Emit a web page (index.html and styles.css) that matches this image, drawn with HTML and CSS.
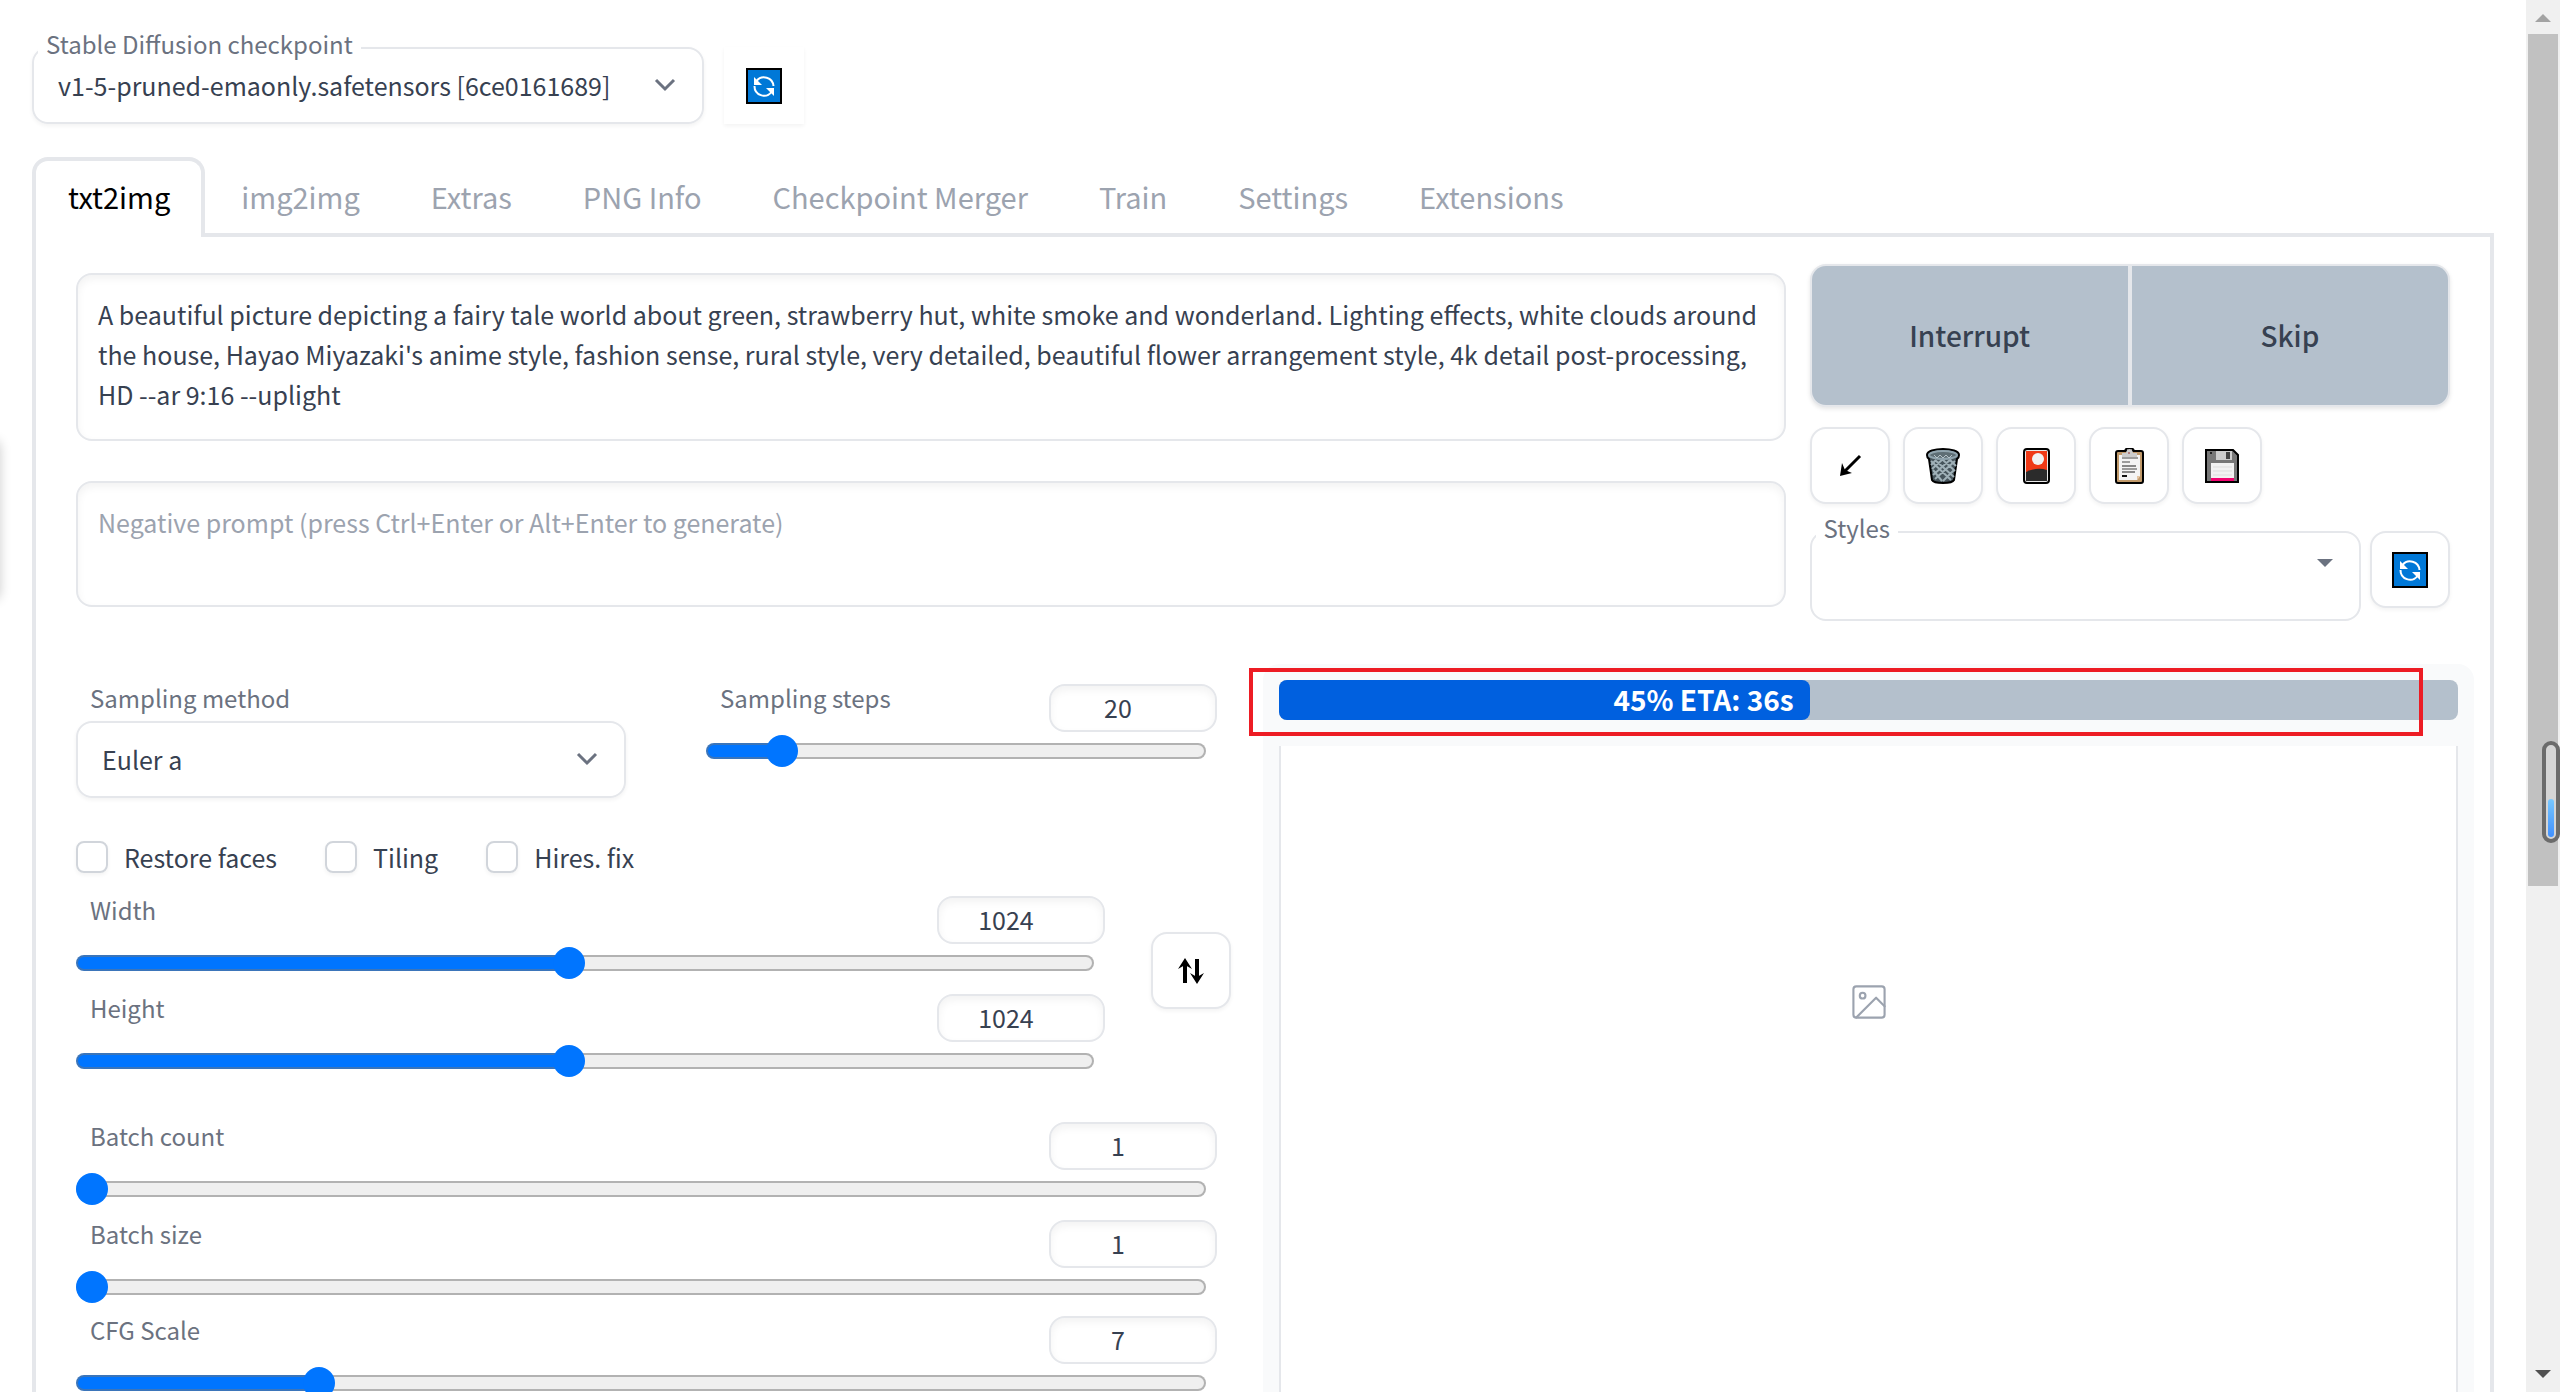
FILE: index.html
```html
<!DOCTYPE html>
<html lang="en">
<head>
<meta charset="utf-8">
<title>Stable Diffusion</title>
<link rel="stylesheet" href="styles.css">
</head>
<body>
<svg class="symbols" aria-hidden="true">
  <symbol id="refresh" viewBox="0 0 36 36">
    <rect width="36" height="36" fill="#000"/><rect x="2" y="2" width="32" height="32" fill="#0078d7"/>
    <path d="M10.500 13a9.500 9.500 0 0 1 17 5M8.500 18a9.500 9.500 0 0 0 17 6" fill="none" stroke="#fff" stroke-width="2"/>
    <path d="M8 9v8h8zM28 28v-8h-8z" fill="#fff"/>
  </symbol>
  <symbol id="chevron" viewBox="0 0 24 24"><path d="M3 7l9 9 9-9" fill="none" stroke="#6b7280" stroke-width="3"/></symbol>
</svg>

<main class="app">
  <header class="quick">
    <div class="outlined checkpoint">
      <label class="legend" for="checkpoint">Stable Diffusion checkpoint</label>
      <select id="checkpoint" class="select"><option>v1-5-pruned-emaonly.safetensors [6ce0161689]</option></select>
      <svg class="chevron"><use href="#chevron"/></svg>
    </div>
    <button class="tool plain" aria-label="Refresh checkpoints"><svg class="icon"><use href="#refresh"/></svg></button>
  </header>

  <nav class="tabs">
    <button class="tab active">txt2img</button><button class="tab">img2img</button><button class="tab">Extras</button><button class="tab">PNG Info</button><button class="tab">Checkpoint Merger</button><button class="tab">Train</button><button class="tab">Settings</button><button class="tab">Extensions</button>
  </nav>

  <section class="panel">
    <div class="top-row">
      <div class="prompts">
        <textarea class="prompt" rows="3" aria-label="Prompt">A beautiful picture depicting a fairy tale world about green, strawberry hut, white smoke and wonderland. Lighting effects, white clouds around the house, Hayao Miyazaki's anime style, fashion sense, rural style, very detailed, beautiful flower arrangement style, 4k detail post-processing, HD --ar 9:16 --uplight</textarea>
        <textarea class="prompt" rows="2" aria-label="Negative prompt" placeholder="Negative prompt (press Ctrl+Enter or Alt+Enter to generate)"></textarea>
      </div>
      <div class="actions">
        <div class="run"><button>Interrupt</button><button>Skip</button></div>
        <div class="tools">
          <button class="tool" aria-label="Read parameters"><svg class="icon" viewBox="0 0 36 36"><path d="M28 8L12 24" stroke="#000" stroke-width="3"/><path d="M8 28l2-13 3 7 7 3z"/></svg></button>
          <button class="tool" aria-label="Clear prompt"><svg class="icon" viewBox="0 0 36 36">
            <path d="M2 7c0-8 32-8 32 0 0 3-2 4-2 4l-3 21c-2 4-20 4-22 0L4 11S2 10 2 7z" fill="#46545b" stroke="#000" stroke-width="2"/>
            <path d="M6 13l20 19M8 22l9 11M10 12l19 17M18 12l12 11M25 12l6 6M30 13L10 31M29 22L18 33M26 11L8 27M18 11L7 21M11 12l-5 5" stroke="#9fb0b7" stroke-width="2" fill="none"/>
            <ellipse cx="18" cy="7" rx="14" ry="4" fill="#5e6e75" stroke="#90a4ae" stroke-width="2"/><path d="M9 7l3 3 3-3 3 3 3-3 3 3 3-3" stroke="#b5c2c8" fill="none"/></svg></button>
          <button class="tool" aria-label="Show extra networks"><svg class="icon" viewBox="0 0 36 36">
            <rect x="6" y="1" width="25" height="34" rx="3" fill="#e8e8e8" stroke="#000" stroke-width="2"/><path d="M8 3h21v22H8z" fill="#f03a17"/><path d="M8 24c8-4 15-4 21-2v11H8z" fill="#2b2b2b"/><circle cx="20" cy="11" r="6" fill="#f2f2f2"/></svg></button>
          <button class="tool" aria-label="Apply styles"><svg class="icon" viewBox="0 0 36 36">
            <rect x="5" y="3" width="27" height="32" rx="2" fill="#c19a6b" stroke="#000" stroke-width="2"/><path d="M8 7h21v21l-3 4H8z" fill="#f4f4f4"/><path d="M26 32v-4h3z" fill="#e3c3a0"/>
            <path d="M11 9V5h4c1-6 6-6 7 0h4v4z" fill="#ccc"/><path d="M14 3c1-4 8-4 9 0" fill="none" stroke="#000" stroke-width="2"/><circle cx="18" cy="5" r="1" fill="#a66"/>
            <path d="M11 10h16M11 14h8M11 21h15" stroke="#444" stroke-width="1"/><path d="M11 18h14M11 24h13" stroke="#888" stroke-width="2"/><path d="M11 28h5" stroke="#111" stroke-width="2"/></svg></button>
          <button class="tool" aria-label="Save style"><svg class="icon" viewBox="0 0 36 36">
            <path d="M2 2h27l5 5v27H2z" fill="#777" stroke="#000" stroke-width="2"/><path d="M12 3h16v9H12z" fill="#ccc"/><path d="M22 4h4v7h-4z" fill="#444"/><path d="M6 4h2v2H6z" fill="#222"/><path d="M7 15h23v15H7z" fill="#f2f2f2"/><path d="M9 19h19M9 23h19M9 27h19" stroke="#ddd"/><path d="M7 30h23v3H7z" fill="#f0046f"/></svg></button>
        </div>
        <div class="styles-row">
          <div class="outlined styles">
            <label class="legend" for="styles">Styles</label>
            <input id="styles" class="styles-input" type="text">
            <svg class="caret" viewBox="0 0 16 8"><path d="M0 0h16L8 8z" fill="#6b7280"/></svg>
          </div>
          <button class="tool" aria-label="Refresh styles"><svg class="icon"><use href="#refresh"/></svg></button>
        </div>
      </div>
    </div>

    <div class="bottom-row">
      <div class="settings">
        <div class="sampling">
          <div class="method">
            <label class="label" for="method">Sampling method</label>
            <div class="outlined"><select id="method" class="select"><option>Euler a</option></select><svg class="chevron"><use href="#chevron"/></svg></div>
          </div>
          <div class="slider steps">
            <div class="slider-head"><label class="label" for="steps">Sampling steps</label><input class="number" type="number" value="20" aria-label="Sampling steps value"></div>
            <input id="steps" class="range" type="range" min="1" max="150" value="20" style="--fill:15%">
          </div>
        </div>
        <div class="checks">
          <label class="check"><input type="checkbox">Restore faces</label>
          <label class="check"><input type="checkbox">Tiling</label>
          <label class="check"><input type="checkbox">Hires. fix</label>
        </div>
        <div class="size">
          <div class="sliders">
            <div class="slider">
              <div class="slider-head"><label class="label" for="width">Width</label><input class="number" type="number" value="1024" aria-label="Width value"></div>
              <input id="width" class="range" type="range" min="64" max="2048" value="1024" style="--fill:48%">
            </div>
            <div class="slider">
              <div class="slider-head"><label class="label" for="height">Height</label><input class="number" type="number" value="1024" aria-label="Height value"></div>
              <input id="height" class="range" type="range" min="64" max="2048" value="1024" style="--fill:48%">
            </div>
          </div>
          <button class="tool" aria-label="Swap width and height"><svg class="icon" viewBox="0 0 36 36"><path d="M12 30V10M24 6v20" stroke="#000" stroke-width="4"/><path d="M5 16l7-11 7 11-7-4zM17 20l7 11 7-11-7 4z"/></svg></button>
        </div>
        <div class="sliders batch">
          <div class="slider">
            <div class="slider-head"><label class="label" for="count">Batch count</label><input class="number" type="number" value="1" aria-label="Batch count value"></div>
            <input id="count" class="range" type="range" min="1" max="100" value="1" style="--fill:0%">
          </div>
          <div class="slider">
            <div class="slider-head"><label class="label" for="bsize">Batch size</label><input class="number" type="number" value="1" aria-label="Batch size value"></div>
            <input id="bsize" class="range" type="range" min="1" max="8" value="1" style="--fill:0%">
          </div>
        </div>
        <div class="sliders cfg">
          <div class="slider">
            <div class="slider-head"><label class="label" for="cfg">CFG Scale</label><input class="number" type="number" value="7" aria-label="CFG Scale value"></div>
            <input id="cfg" class="range" type="range" min="1" max="30" value="7" style="--fill:21%">
          </div>
        </div>
      </div>

      <div class="results">
        <div class="progress"><div class="bar" style="width:45%">45% ETA: 36s</div></div>
        <div class="gallery"><svg class="picture" viewBox="0 0 24 24" fill="none" stroke="#9ca3af" stroke-width="1.5" stroke-linecap="round" stroke-linejoin="round"><rect x="1" y="1" width="22" height="22" rx="2"/><circle cx="7.500" cy="7.500" r="2"/><path d="M23 15l-6-6L3 23"/></svg></div>
        <div class="highlight"></div>
      </div>
    </div>
  </section>
</main>

<div class="left-handle"></div>
<div class="scrollbar">
  <svg class="arrow disabled" viewBox="0 0 16 8"><path d="M0 8h16L8 0z"/></svg>
  <div class="thumb"></div>
  <svg class="arrow" viewBox="0 0 16 8"><path d="M0 0h16L8 8z"/></svg>
</div>
<div class="meter"><div class="meter-fill"></div></div>
</body>
</html>
```
FILE: styles.css
```css
* { box-sizing: border-box; }
html { overflow: hidden; }
body {
  margin: 0;
  background: #fff;
  color: #374151;
  font-family: "Noto Sans CJK SC", "Noto Sans", sans-serif;
  font-size: 25px;
  line-height: 40px;
}
button, input, select, textarea { font: inherit; color: inherit; margin: 0; }
button { padding: 0; background: #fff; border: 0; }
.symbols { position: absolute; width: 0; height: 0; }

.app { margin-right: 34px; padding: 47px 32px 0; }

/* checkpoint selector */
.quick { display: flex; gap: 20px; margin-bottom: 33px; }
.outlined { position: relative; border: 2px solid #e5e7eb; border-radius: 16px; box-shadow: 0 2px 4px rgba(0, 0, 0, .05); }
.checkpoint { width: 672px; }
.legend {
  position: absolute;
  z-index: 1;
  left: 4px;
  top: -21px;
  padding: 0 8px;
  background: #fff;
  color: #6b7280;
  font-size: 24px;
  line-height: 32px;
}
.select {
  display: block;
  width: 100%;
  height: 73px;
  padding: 0 64px 2px 24px;
  border: 0;
  border-radius: 16px;
  background: #fff;
  appearance: none;
}
.chevron { position: absolute; right: 25px; top: 24px; width: 24px; height: 24px; pointer-events: none; }
.tool {
  display: flex;
  flex: none;
  align-items: center;
  justify-content: center;
  width: 80px;
  height: 77px;
  border: 2px solid #e5e7eb;
  border-radius: 16px;
  box-shadow: 0 2px 4px rgba(0, 0, 0, .05);
}
.tool.plain { border: 0; border-radius: 0; }
.icon { width: 36px; height: 36px; }

/* tabs */
.tabs { display: flex; position: relative; margin-bottom: -4px; }
.tab {
  height: 80px;
  padding: 0 31px 7px 32px;
  border: 4px solid transparent;
  border-bottom: 0;
  border-radius: 16px 16px 0 0;
  background: transparent;
  color: #9ca3af;
  font-size: 29px;
}
.tab.active { border-color: #e5e7eb; background: #fff; color: #000; }

.panel { padding: 27px 16px 0 40px; border: 4px solid #e5e7eb; border-bottom: 0; }
.top-row { display: grid; grid-template-columns: 1711fr 641fr; gap: 24px; margin-right: 24px; }
.prompts { display: flex; flex-direction: column; gap: 40px; padding-top: 9px; }
.prompt {
  display: block;
  width: 100%;
  height: 168px;
  padding: 19px 20px;
  border: 2px solid #e5e7eb;
  border-radius: 16px;
  box-shadow: inset 0 4px 8px rgba(0, 0, 0, .05);
  resize: none;
  overflow: hidden;
}
.prompt + .prompt { height: 126px; }
.prompt::placeholder { color: #9ca3af; opacity: 1; }

.run { display: grid; grid-template-columns: 1fr 1fr; gap: 4px; height: 143px; border: 2px solid #e5e7eb; border-radius: 16px; background: #e5e7eb; overflow: hidden; box-shadow: 0 2px 4px rgba(0, 0, 0, .1); }
.run button { padding-bottom: 2px; background: #b4c0cc; font-size: 28px; font-weight: 500; }
.tools { display: flex; gap: 13px; margin-top: 20px; }
.styles-row { display: flex; gap: 9px; margin-top: 27px; }
.styles { flex: 1; height: 90px; box-shadow: none; }
.styles-input { width: 100%; height: 84px; padding: 0 64px 0 20px; border: 0; background: transparent; outline: 0; }
.caret { position: absolute; right: 26px; top: 26px; width: 16px; height: 8px; }

/* generation settings */
.bottom-row { display: grid; grid-template-columns: 1155fr 1211fr; gap: 32px; margin-top: 43px; }
.settings { padding-top: 20px; }
.sampling { display: flex; gap: 80px; padding-right: 14px; }
.method { width: 550px; }
.steps { flex: 1; }
.label { display: block; padding-left: 14px; color: #6b7280; font-size: 24px; line-height: 27px; }
.method .label { margin-bottom: 10px; }
.slider-head { display: flex; justify-content: space-between; height: 48px; }
.number {
  width: 168px;
  height: 48px;
  padding: 0 30px 2px 0;
  border: 2px solid #e5e7eb;
  border-radius: 16px;
  box-shadow: inset 0 4px 8px rgba(0, 0, 0, .05);
  text-align: center;
  appearance: textfield;
}
.number::-webkit-inner-spin-button { appearance: none; }
.range {
  display: block;
  width: calc(100% - 11px);
  height: 16px;
  margin-top: 11px;
  border: 2px solid rgba(118, 118, 118, .5);
  border-radius: 8px;
  background: linear-gradient(#0075ff, #0075ff) 0 / var(--fill) 100% no-repeat border-box #efefef;
  appearance: none;
}
.range::-webkit-slider-runnable-track { height: 12px; margin: 0 -2px; }
.range::-webkit-slider-thumb { width: 32px; height: 32px; margin-top: -10px; border-radius: 50%; background: #0075ff; appearance: none; }
.checks { display: flex; gap: 48px; margin-top: 39px; }
.check { display: flex; align-items: center; gap: 16px; }
.check input { width: 32px; height: 32px; border: 2px solid #d1d5db; border-radius: 8px; box-shadow: 0 2px 4px rgba(0, 0, 0, .05); appearance: none; }
.size { display: flex; align-items: center; gap: 46px; margin-top: 19px; }
.size .tool { margin-top: -24px; }
.sliders { display: flex; flex: 1; flex-direction: column; gap: 23px; }
.batch { margin-top: 53px; padding-right: 14px; }
.cfg { margin-top: 21px; padding-right: 14px; }

/* output */
.results { position: relative; padding: 16px; border-radius: 16px; background: #f9fafb; }
.progress { height: 40px; border-radius: 8px; background: #b4c0cc; }
.bar { height: 40px; padding-right: 16px; border-radius: 8px; background: #0060df; color: #fff; font-size: 28px; font-weight: 700; line-height: 38px; text-align: right; white-space: nowrap; }
.gallery { display: flex; justify-content: center; min-height: 680px; margin-top: 26px; padding-top: 239px; border: 2px solid #e5e7eb; border-width: 0 2px; background: #fff; }
.picture { width: 34px; height: 34px; }
.highlight { position: absolute; left: -14px; right: 51px; top: 4px; height: 68px; border: 4px solid #ed1c24; }

/* window edges */
.scrollbar { position: fixed; top: 0; right: 0; bottom: 0; display: flex; flex-direction: column; align-items: center; width: 34px; padding: 14px 0; background: #f0f0f0; }
.arrow { flex: none; width: 16px; height: 8px; fill: #505050; }
.arrow.disabled { fill: #a3a3a3; }
.thumb { width: 30px; height: 852px; margin: 12px 0 auto; background: #c1c1c1; }
.meter { position: fixed; right: 0; top: 741px; display: flex; align-items: flex-end; width: 18px; height: 102px; padding: 2px; border: 4px solid #6b6b6b; border-radius: 9px; background: #d5d5d5; }
.meter-fill { flex: 1; height: 38px; border-radius: 3px; background: linear-gradient(#78c8ff, #4090ff); }
.left-handle { position: fixed; left: -16px; top: 440px; width: 16px; height: 160px; border-radius: 8px; box-shadow: 0 0 12px rgba(0, 0, 0, .2); }
```
